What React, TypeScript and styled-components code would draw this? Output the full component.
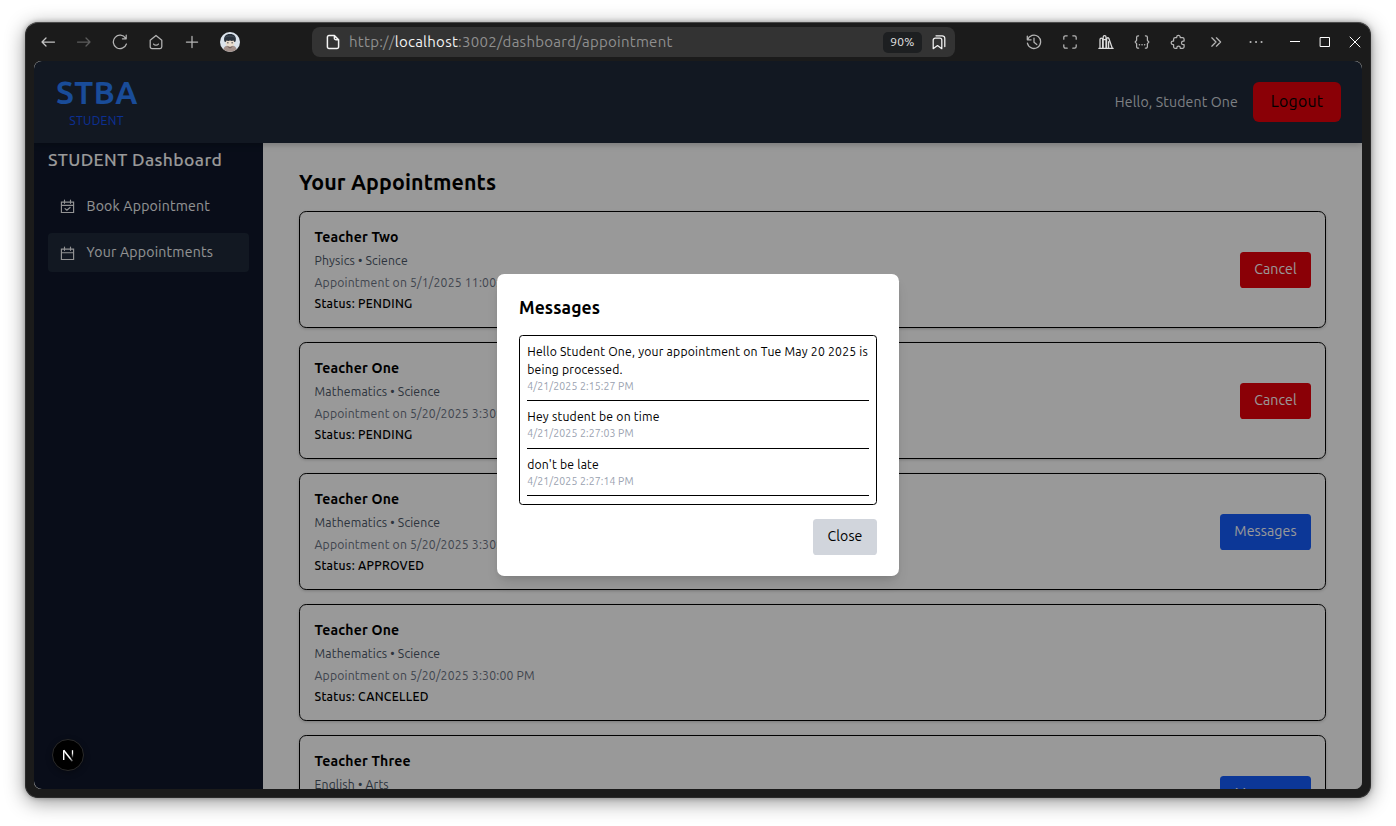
import React from 'react';
import styled, { createGlobalStyle, css } from 'styled-components';

const GlobalStyle = createGlobalStyle`
  *, *::before, *::after { box-sizing: border-box; }
  html, body, #root { margin: 0; height: 100%; }
  body { background: #fff; overflow: hidden; }
  body, button {
    font-family: Ubuntu, 'Noto Sans', 'Open Sans', sans-serif;
    font-weight: 370;
  }
  h1, h2, h3, p, ul { margin: 0; padding: 0; }
  button { border: 0; margin: 0; padding: 0; background: none; color: inherit; }
`;

/* ---------- Browser window ---------- */

const Desktop = styled.div`
  height: 826px;
  padding: 22px 25px 28px;
  background: #fff;
`;

const BrowserWindow = styled.div`
  height: 776px;
  display: flex;
  flex-direction: column;
  padding: 0 8px 8px;
  border: 1px solid #2b2b2b;
  border-top-color: #4b4b4b;
  border-radius: 13px;
  background: #1b1b1b;
  box-shadow: 0 4px 20px rgba(0, 0, 0, 0.42), 0 0 5px rgba(0, 0, 0, 0.3);
`;

const Toolbar = styled.div`
  display: flex;
  align-items: center;
  flex: none;
  height: 38px;
  margin: 0 -8px;
  padding-left: 4px;
  color: #b3b3b3;
`;

const ToolButton = styled.button<{ $width?: number; $tone?: string }>`
  display: flex;
  align-items: center;
  justify-content: center;
  flex: none;
  width: ${(p) => p.$width ?? 36}px;
  height: 30px;
  color: ${(p) => p.$tone ?? '#b5b5b5'};
`;

const Glyph = styled.svg`
  display: block;
  width: 16px;
  height: 16px;
  fill: none;
  stroke: currentColor;
  stroke-width: 1.25;
  stroke-linecap: round;
  stroke-linejoin: round;
`;

const AvatarPicture = styled.svg`
  display: block;
  width: 20px;
  height: 20px;
`;

const AddressBar = styled.div`
  display: flex;
  align-items: center;
  width: 643px;
  height: 30px;
  margin-left: 62px;
  padding: 0 8px 0 13px;
  border-radius: 8px;
  background: #333;
  color: #f4f4f4;
`;

const Url = styled.div`
  flex: 1;
  padding-left: 8px;
  font-size: 15px;
  line-height: 20px;
  letter-spacing: 0.26px;
  white-space: nowrap;
  color: #8f8f8f;
`;

const UrlHost = styled.span`
  color: #f2f2f2;
`;

const ZoomLevel = styled.div`
  width: 39px;
  height: 21px;
  margin-right: 9px;
  border-radius: 5px;
  background: #1d1f21;
  color: #e6e6e6;
  font-size: 12px;
  line-height: 20px;
  letter-spacing: 0.3px;
  text-align: center;
`;

const ToolActions = styled.div`
  display: flex;
  align-items: center;
  margin-left: 61px;
`;

const WindowControls = styled.div`
  display: flex;
  margin-left: 4px;
`;

/* ---------- Page ---------- */

const Page = styled.div`
  position: relative;
  flex: 1;
  min-height: 0;
  display: flex;
  flex-direction: column;
  overflow: hidden;
  border-radius: 7px;
  background: #fff;
`;

const Header = styled.header`
  position: relative;
  z-index: 1;
  flex: none;
  display: flex;
  align-items: center;
  justify-content: space-between;
  height: 82px;
  padding: 0 21px;
  border-radius: 8px 8px 0 0;
  background: #1e2939;
  box-shadow: 0 2px 6px rgba(0, 0, 0, 0.22);
`;

const Brand = styled.div`
  padding: 1px 1px 0;
  text-align: center;
`;

const BrandName = styled.h1`
  font-size: 31.6px;
  font-weight: 590;
  line-height: 36px;
  letter-spacing: 0.7px;
  color: #2b7fff;
`;

const BrandRole = styled.p`
  margin-top: 1px;
  padding-right: 1px;
  font-size: 12.2px;
  line-height: 18px;
  letter-spacing: 0.3px;
  color: #1550f5;
`;

const Account = styled.div`
  display: flex;
  align-items: center;
  gap: 15px;
`;

const Greeting = styled.span`
  font-size: 14.1px;
  line-height: 22px;
  letter-spacing: 0.15px;
  color: #d1d5dc;
`;

const LogoutButton = styled.button`
  width: 88px;
  height: 40px;
  padding-bottom: 2px;
  border-radius: 6px;
  background: #e7000b;
  color: #000;
  font-size: 15.8px;
  line-height: 24px;
  letter-spacing: 0.25px;
`;

const Body = styled.div`
  flex: 1;
  min-height: 0;
  display: flex;
`;

const Sidebar = styled.aside`
  flex: none;
  width: 229px;
  padding: 4px 14px 0;
  border-radius: 0 0 0 8px;
  background: #0f172a;
  color: #fff;
`;

const SidebarTitle = styled.h2`
  font-size: 17.5px;
  font-weight: 500;
  line-height: 25px;
  letter-spacing: 0.38px;
  white-space: nowrap;
`;

const NavList = styled.nav`
  display: flex;
  flex-direction: column;
  gap: 7px;
  margin-top: 15px;
`;

const NavItem = styled.a<{ $active?: boolean }>`
  display: flex;
  align-items: center;
  gap: 12px;
  height: 39px;
  padding: 0 12px 0 12px;
  border-radius: 4px;
  background: ${(p) => (p.$active ? '#1e2939' : 'transparent')};
  color: #f3f4f6;
  font-size: 14.1px;
  line-height: 22px;
  letter-spacing: 0.21px;

  svg { width: 15px; height: 15px; margin-top: ${(p) => (p.$active ? 2 : 0)}px; }
  span { margin-left: -0.5px; padding-bottom: 1px; }
`;

const Main = styled.main`
  flex: 1;
  min-width: 0;
  padding: 24px 36px 0;
  color: #000;
`;

const PageTitle = styled.h2`
  font-size: 21.4px;
  font-weight: 570;
  line-height: 30px;
  letter-spacing: 0.12px;
`;

const CardList = styled.div`
  display: flex;
  flex-direction: column;
  gap: 14px;
  margin-top: 14px;
`;

const Card = styled.article`
  display: flex;
  align-items: center;
  justify-content: space-between;
  flex: none;
  height: 117px;
  padding: 0 14px 0 14.5px;
  border: 1px solid #000;
  border-radius: 7.2px;
  box-shadow: 0 1px 3px rgba(0, 0, 0, 0.2);
`;

const CardText = styled.div`
  display: flex;
  flex-direction: column;
  padding-top: 1px;
  white-space: nowrap;
`;

const TeacherName = styled.h3`
  font-size: 14px;
  font-weight: 600;
  line-height: 20px;
  letter-spacing: 0.2px;
`;

const cardLine = css`
  font-size: 12.2px;
  line-height: 18px;
`;

const Subject = styled.p`
  ${cardLine}
  margin-top: 5px;
  letter-spacing: 0.18px;
  color: #4a5565;
`;

const When = styled.p`
  ${cardLine}
  margin-top: 4px;
  letter-spacing: 0.19px;
  color: #6a7282;
`;

const Status = styled.p`
  ${cardLine}
  margin-top: 3px;
  font-weight: 520;
  letter-spacing: 0.28px;
`;

const CardAction = styled.button<{ $kind: 'cancel' | 'messages' }>`
  width: ${(p) => (p.$kind === 'cancel' ? 71 : 91)}px;
  height: 36px;
  padding-bottom: 2px;
  border-radius: 3.6px;
  background: ${(p) => (p.$kind === 'cancel' ? '#e7000b' : '#155dfc')};
  color: #fff;
  font-size: 14.1px;
  letter-spacing: 0.1px;
`;

/* ---------- Modal ---------- */

const Backdrop = styled.div`
  position: absolute;
  inset: 0;
  z-index: 2;
  display: flex;
  align-items: center;
  justify-content: center;
  background: rgba(0, 0, 0, 0.4);
`;

const Dialog = styled.section`
  width: 402px;
  padding: 21px 22px;
  border-radius: 7.2px;
  background: #fff;
  color: #000;
  box-shadow: 0 9px 14px -3px rgba(0, 0, 0, 0.12), 0 3px 6px -3px rgba(0, 0, 0, 0.12);
`;

const DialogTitle = styled.h2`
  font-size: 17.5px;
  font-weight: 580;
  line-height: 25px;
  letter-spacing: 0.1px;
`;

const MessageBox = styled.div`
  height: 170px;
  margin-top: 15px;
  padding: 7px 7.2px;
  border: 1px solid #000;
  border-radius: 3.6px;
`;

const Message = styled.div`
  margin-bottom: 7.2px;
  padding-bottom: 7.2px;
  border-bottom: 1px solid #000;
`;

const MessageText = styled.p`
  font-size: 12.2px;
  line-height: 18px;
  letter-spacing: 0.21px;
  color: #000;
`;

const MessageTime = styled.p`
  font-size: 10.5px;
  line-height: 14px;
  letter-spacing: 0.12px;
  color: #99a1af;
`;

const DialogActions = styled.div`
  display: flex;
  justify-content: flex-end;
  margin-top: 14px;
`;

const CloseButton = styled.button`
  width: 64px;
  height: 36px;
  padding-bottom: 2px;
  border-radius: 3.6px;
  background: #d1d5dc;
  color: #000;
  font-size: 14.1px;
  letter-spacing: 0.1px;
`;

const DevBadge = styled.div`
  position: absolute;
  z-index: 3;
  left: 18px;
  bottom: 18px;
  display: flex;
  align-items: center;
  justify-content: center;
  width: 32px;
  height: 32px;
  border: 1px solid #2a2a2a;
  border-radius: 50%;
  background: #000;
  box-shadow: 0 2px 6px rgba(0, 0, 0, 0.3);
`;

/* ---------- Icons ---------- */

const icons = {
  back: <path d="M14.5 8H2M6 4 2 8l4 4" />,
  forward: <path d="M1.5 8H14M10 4l4 4-4 4" />,
  reload: <path d="M13.6 4.2A6.7 6.7 0 1 0 14.4 10M14.2 1.2v3.6h-3.8" />,
  home: (
    <>
      <path d="M2.2 6.2 8 1.4l5.8 4.8v6.6a1.7 1.7 0 0 1-1.7 1.7H3.9a1.7 1.7 0 0 1-1.7-1.7z" />
      <path d="M5.6 10.1c1.2 1.5 3.6 1.5 4.8 0" />
    </>
  ),
  plus: <path d="M8 2.4v11.2M2.4 8h11.2" />,
  file: <path d="M9.4 1.6H4A1.6 1.6 0 0 0 2.4 3.2v9.6A1.6 1.6 0 0 0 4 14.4h8a1.6 1.6 0 0 0 1.6-1.6V5.8zM9.4 1.6v2.6a1.6 1.6 0 0 0 1.6 1.6h2.6" strokeWidth="1.5" />,
  bookmark: (
    <>
      <path d="M2.2 6.1a2 2 0 0 1 2-2h4.6a2 2 0 0 1 2 2v8.6L6.5 11.6l-4.3 3.1z" />
      <path d="M5 1.8h6.2a2.6 2.6 0 0 1 2.6 2.6v8.2" />
    </>
  ),
  history: (
    <>
      <path d="M1.3 2v3.8h3.8M1.6 5.6A6.7 6.7 0 1 1 1.4 9.2" />
      <path d="M8 4v4.3l2.8 2.2" />
    </>
  ),
  capture: <path d="M1.8 5.2V3.4a1.6 1.6 0 0 1 1.6-1.6h1.8M10.8 1.8h1.8a1.6 1.6 0 0 1 1.6 1.6v1.8M14.2 10.8v1.8a1.6 1.6 0 0 1-1.6 1.6h-1.8M5.2 14.2H3.4a1.6 1.6 0 0 1-1.6-1.6v-1.8" />,
  library: (
    <path d="M.8 14.3h14.4M2 14V5.5a1.3 1.3 0 0 1 2.6 0V14M5.2 14V3a1.4 1.4 0 0 1 2.8 0V14M5.2 5.6H8M8.6 14V4.9a1.2 1.2 0 0 1 2.2-.6L14.2 14M10.6 7.5V14" />
  ),
  braces: (
    <>
      <path d="M4.6 1.8h-.5a1.5 1.5 0 0 0-1.5 1.5v3L1.2 8l1.4 1.7v3a1.5 1.5 0 0 0 1.5 1.5h.5M11.4 1.8h.5a1.5 1.5 0 0 1 1.5 1.5v3L14.8 8l-1.4 1.7v3a1.5 1.5 0 0 1-1.5 1.5h-.5" />
      <path d="M5.4 10.8h.1M8 10.8h.1M10.6 10.8h.1" strokeWidth="1.5" />
    </>
  ),
  puzzle: <path d="M3.6 5.2a1.6 1.6 0 0 1 1.6-1.6h1.5v-.5a1.75 1.75 0 0 1 3.5 0v.5h2.3a1.6 1.6 0 0 1 1.6 1.6v1.9h-.8a1.8 1.8 0 0 0 0 3.6h.8v2.1a1.6 1.6 0 0 1-1.6 1.6h-2.2v-.5a1.75 1.75 0 0 0-3.5 0v.5H5.2a1.6 1.6 0 0 1-1.6-1.6v-2.2h-.7a1.75 1.75 0 0 1 0-3.5h.7z" />,
  chevrons: <path d="M3.8 3.8 8 8l-4.2 4.2M8.4 3.8 12.6 8l-4.2 4.2" />,
  dots: <path d="M2.5 8h.1M8 8h.1M13.5 8h.1" strokeWidth="2" />,
  minimize: <path d="M3 7.5h10" strokeWidth="1" strokeLinecap="butt" />,
  maximize: <path d="M3.5 3.5h9v9h-9z" strokeWidth="1" strokeLinejoin="miter" />,
  close: <path d="m3 3 10 10M13 3 3 13" strokeWidth="1" />,
  calendar: <path d="M1.5 3.4h13v11h-13zM1.5 7.2h13M4.8 1.2v3.4M11.2 1.2v3.4" strokeLinejoin="miter" />,
  calendarCheck: (
    <>
      <path d="M1.5 3.4h13v11h-13zM1.5 6.8h13M4.8 1.2v3.4M11.2 1.2v3.4" strokeLinejoin="miter" />
      <path d="m5.4 10.2 1.9 1.8 3.4-3" />
    </>
  ),
};

type IconName = keyof typeof icons;

const Icon = ({ name }: { name: IconName }) => (
  <Glyph viewBox="0 0 16 16" aria-hidden="true">{icons[name]}</Glyph>
);

const Avatar = () => (
  <AvatarPicture viewBox="0 0 20 20" aria-hidden="true">
    <defs>
      <clipPath id="avatar-clip"><circle cx="10" cy="10" r="10" /></clipPath>
    </defs>
    <g clipPath="url(#avatar-clip)">
      <rect width="20" height="20" fill="#dbe3ec" />
      <path d="M3 20c.2-3.500 1.200-5.400 3.500-6.200h7c2.300.8 3.300 2.700 3.500 6.200z" fill="#a3918b" />
      <path d="M5.600 8h8.800v3.200c0 2.100-2 3.400-4.400 3.400s-4.400-1.300-4.400-3.400z" fill="#e9dccd" />
      <path d="M4.400 9.400C3.200 4.600 5.600 2 10 2s6.800 2.600 5.600 7.400l-1.400.6-.7-1.500-1.700.5-1.800-.4-1.800.4-1.700-.5-.7 1.500z" fill="#2a323c" />
      <path d="M5.400 5.200c2-1.600 7-1.600 9.200 0" stroke="#4a5561" strokeWidth=".8" fill="none" />
      <path d="M7 10.800h1.600M11.400 10.800h1.600" stroke="#3b3d42" strokeWidth=".9" />
      <path d="M7.600 14.400 10 16l2.400-1.600" stroke="#5e4b47" strokeWidth=".8" fill="none" />
    </g>
  </AvatarPicture>
);

const NextMark = () => (
  <svg width="16" height="16" viewBox="0 0 16 16" fill="none" aria-hidden="true">
    <defs>
      <linearGradient id="next-stem" x1="0" y1="3" x2="0" y2="11" gradientUnits="userSpaceOnUse">
        <stop offset=".4" stopColor="#fff" />
        <stop offset="1" stopColor="#fff" stopOpacity="0" />
      </linearGradient>
      <linearGradient id="next-diagonal" x1="8" y1="8" x2="13" y2="14.5" gradientUnits="userSpaceOnUse">
        <stop offset=".4" stopColor="#fff" />
        <stop offset="1" stopColor="#fff" stopOpacity=".2" />
      </linearGradient>
    </defs>
    <path d="M3.7 13V3.2" stroke="#fff" strokeWidth="1.4" />
    <path d="M3.7 3.2 12.4 14.2" stroke="url(#next-diagonal)" strokeWidth="1.5" />
    <path d="M12.500 3.200v8.200" stroke="url(#next-stem)" strokeWidth="1.3" />
  </svg>
);

/* ---------- Data ---------- */

interface Appointment {
  teacher: string;
  subject: string;
  when: string;
  status: string;
  action?: 'cancel' | 'messages';
}

const appointments: Appointment[] = [
  { teacher: 'Teacher Two', subject: 'Physics • Science', when: '5/1/2025 11:00:00 AM', status: 'PENDING', action: 'cancel' },
  { teacher: 'Teacher One', subject: 'Mathematics • Science', when: '5/20/2025 3:30:00 PM', status: 'PENDING', action: 'cancel' },
  { teacher: 'Teacher One', subject: 'Mathematics • Science', when: '5/20/2025 3:30:00 PM', status: 'APPROVED', action: 'messages' },
  { teacher: 'Teacher One', subject: 'Mathematics • Science', when: '5/20/2025 3:30:00 PM', status: 'CANCELLED' },
  { teacher: 'Teacher Three', subject: 'English • Arts', when: '5/20/2025 3:30:00 PM', status: 'APPROVED', action: 'messages' },
];

const messages = [
  { text: 'Hello Student One, your appointment on Tue May 20 2025 is being processed.', time: '4/21/2025 2:15:27 PM' },
  { text: 'Hey student be on time', time: '4/21/2025 2:27:03 PM' },
  { text: "don't be late", time: '4/21/2025 2:27:14 PM' },
];

const navButtons: { name: IconName; tone?: string }[] = [
  { name: 'back', tone: '#c4c4c4' },
  { name: 'forward', tone: '#5c5c5c' },
  { name: 'reload' },
  { name: 'home' },
  { name: 'plus' },
];

const toolButtons: { name: IconName; width?: number; tone?: string }[] = [
  { name: 'history' },
  { name: 'capture' },
  { name: 'library', tone: '#dcdcdc' },
  { name: 'braces' },
  { name: 'puzzle' },
  { name: 'chevrons', width: 40 },
  { name: 'dots', width: 40 },
];

const windowButtons: IconName[] = ['minimize', 'maximize', 'close'];

export default function App() {
  return (
    <>
      <GlobalStyle />
      <Desktop>
        <BrowserWindow>
          <Toolbar>
            {navButtons.map((b) => (
              <ToolButton key={b.name} $tone={b.tone} aria-label={b.name}><Icon name={b.name} /></ToolButton>
            ))}
            <ToolButton $width={40} aria-label="profile"><Avatar /></ToolButton>
            <AddressBar>
              <Icon name="file" />
              <Url>http://<UrlHost>localhost</UrlHost>:3002/dashboard/appointment</Url>
              <ZoomLevel>90%</ZoomLevel>
              <Icon name="bookmark" />
            </AddressBar>
            <ToolActions>
              {toolButtons.map((b) => (
                <ToolButton key={b.name} $width={b.width} $tone={b.tone} aria-label={b.name}><Icon name={b.name} /></ToolButton>
              ))}
            </ToolActions>
            <WindowControls>
              {windowButtons.map((name) => (
                <ToolButton key={name} $width={30} $tone="#fff" aria-label={name}><Icon name={name} /></ToolButton>
              ))}
            </WindowControls>
          </Toolbar>

          <Page>
            <Header>
              <Brand>
                <BrandName>STBA</BrandName>
                <BrandRole>STUDENT</BrandRole>
              </Brand>
              <Account>
                <Greeting>Hello, Student One</Greeting>
                <LogoutButton>Logout</LogoutButton>
              </Account>
            </Header>
            <Body>
              <Sidebar>
                <SidebarTitle>STUDENT Dashboard</SidebarTitle>
                <NavList>
                  <NavItem><Icon name="calendarCheck" /><span>Book Appointment</span></NavItem>
                  <NavItem $active><Icon name="calendar" /><span>Your Appointments</span></NavItem>
                </NavList>
              </Sidebar>
              <Main>
                <PageTitle>Your Appointments</PageTitle>
                <CardList>
                  {appointments.map((a, i) => (
                    <Card key={i}>
                      <CardText>
                        <TeacherName>{a.teacher}</TeacherName>
                        <Subject>{a.subject}</Subject>
                        <When>Appointment on {a.when}</When>
                        <Status>Status: {a.status}</Status>
                      </CardText>
                      {a.action && (
                        <CardAction $kind={a.action}>{a.action === 'cancel' ? 'Cancel' : 'Messages'}</CardAction>
                      )}
                    </Card>
                  ))}
                </CardList>
              </Main>
            </Body>
            <Backdrop>
              <Dialog>
                <DialogTitle>Messages</DialogTitle>
                <MessageBox>
                  {messages.map((m) => (
                    <Message key={m.time}>
                      <MessageText>{m.text}</MessageText>
                      <MessageTime>{m.time}</MessageTime>
                    </Message>
                  ))}
                </MessageBox>
                <DialogActions>
                  <CloseButton>Close</CloseButton>
                </DialogActions>
              </Dialog>
            </Backdrop>
            <DevBadge><NextMark /></DevBadge>
          </Page>
        </BrowserWindow>
      </Desktop>
    </>
  );
}
